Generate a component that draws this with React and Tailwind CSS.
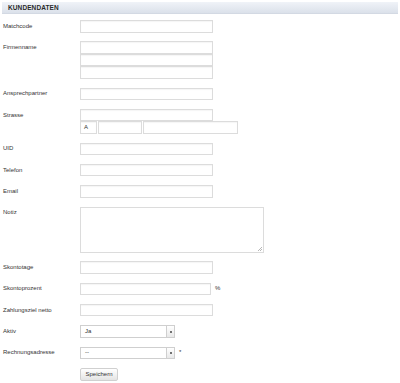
import React from "react";

const Box = ({ w = "w-[133px]", children, className = "" }) => (
  <div className={`h-[12.5px] ${w} border border-[#dcdcdc] bg-white shadow-[inset_0_1px_1px_rgba(0,0,0,0.04)] flex items-center pl-[3px] ${className}`}>
    {children}
  </div>
);

const Select = ({ value }) => (
  <div className="h-[12.5px] w-[95px] border border-[#cfcfcf] bg-white flex items-center">
    <span className="pl-[4px] flex-1">{value}</span>
    <div className="h-full w-[8px] border-l border-[#cfcfcf] bg-gradient-to-b from-white to-[#e8e8e8] flex items-center justify-center">
      <div className="w-[2px] h-[2px] bg-[#444] rounded-full" />
    </div>
  </div>
);

const Row = ({ label, children }) => (
  <div className="flex">
    <div className="w-[77px] h-[12.5px] flex items-center">{label}</div>
    <div className="flex flex-col">{children}</div>
  </div>
);

export default function App() {
  return (
    <div className="w-[400px] h-[383px] bg-white font-['Liberation_Sans',Arial,sans-serif] text-[6px] leading-[7px] text-[#333] overflow-hidden">
      <div className="mx-[2px] mt-[2px] h-[11.5px] bg-gradient-to-b from-[#f0f3f8] to-[#dbe1ea] border-b border-[#d3d9e3] flex items-center pl-[6px] font-bold text-[6.5px] text-[#2a2a2a] tracking-[0.1px]">
        KUNDENDATEN
      </div>
      <div className="pl-[3px] pt-[6.5px] flex flex-col gap-[8.8px]">
        <Row label="Matchcode"><Box /></Row>
        <Row label="Firmenname">
          <Box /><Box /><Box />
        </Row>
        <Row label="Ansprechpartner"><Box /></Row>
        <Row label="Strasse">
          <Box />
          <div className="flex">
            <Box w="w-[17px]">A</Box>
            <Box w="w-[44px]" className="ml-[1px]" />
            <Box w="w-[95px]" className="ml-[1px]" />
          </div>
        </Row>
        <Row label="UID"><Box /></Row>
        <Row label="Telefon"><Box /></Row>
        <Row label="Email"><Box /></Row>
        <Row label="Notiz">
          <div className="relative h-[46px] w-[184px] border border-[#dcdcdc] bg-white">
            <svg className="absolute right-[1px] bottom-[1px]" width="5" height="5" viewBox="0 0 5 5">
              <path d="M5 1 L1 5 M5 3 L3 5" stroke="#999" strokeWidth="0.7" />
            </svg>
          </div>
        </Row>
        <Row label="Skontotage"><Box /></Row>
        <Row label="Skontoprozent">
          <div className="flex items-center">
            <Box w="w-[131px]" />
            <span className="ml-[4px]">%</span>
          </div>
        </Row>
        <Row label="Zahlungsziel netto"><Box /></Row>
        <Row label="Aktiv"><Select value="Ja" /></Row>
        <Row label="Rechnungsadresse">
          <div className="flex items-center">
            <Select value="--" />
            <span className="ml-[4px]">*</span>
          </div>
        </Row>
        <Row label="">
          <div className="h-[13px] w-[38px] border border-[#d0d0d0] rounded-[2px] bg-gradient-to-b from-white to-[#e4e4e4] flex items-center justify-center">
            Speichern
          </div>
        </Row>
      </div>
    </div>
  );
}
